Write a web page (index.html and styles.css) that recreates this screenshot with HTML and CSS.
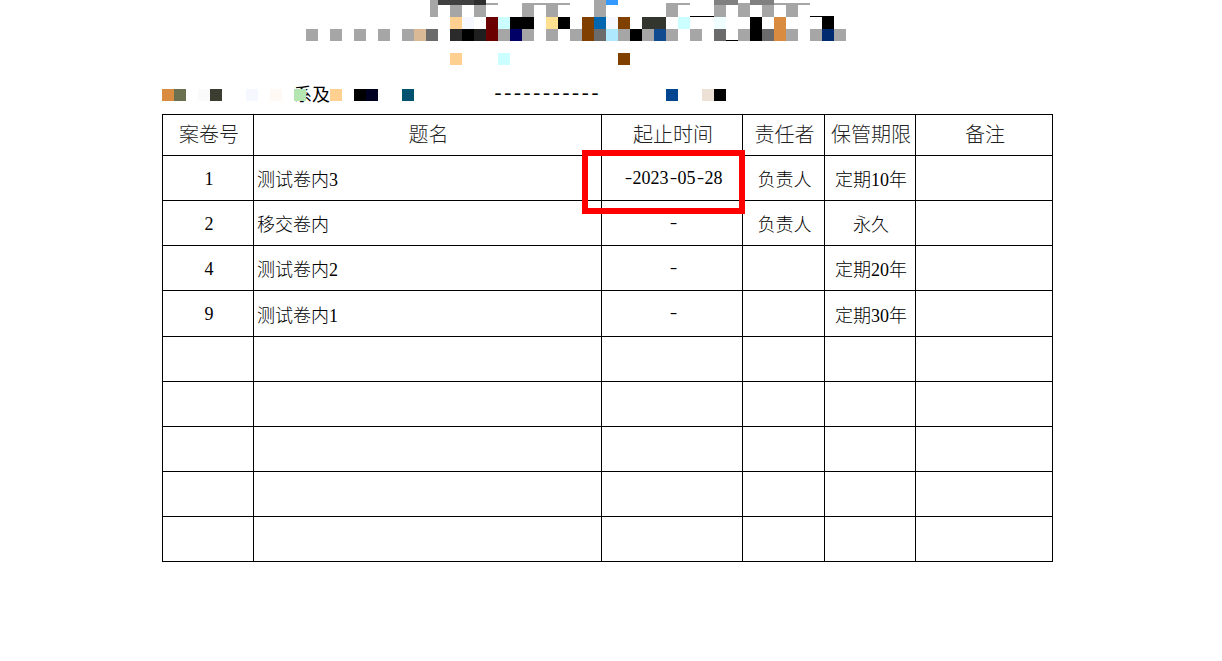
FILE: index.html
```html
<!DOCTYPE html>
<html lang="zh-CN">
<head>
<meta charset="utf-8">
<title>卷内目录</title>
<link rel="stylesheet" href="styles.css">
</head>
<body>
<div class="mosaic" aria-hidden="true">
  <div class="mrow r0"><i></i><i></i><i></i><i></i><i></i><i></i><i></i><i></i><i></i><i></i><i class="p"></i><i class="d4"></i><i class="d4"></i><i class="d4"></i><i class="d2"></i><i class="bar"></i><i></i><i></i><i class="bar"></i><i class="bar"></i><i class="bar"></i><i class="bar"></i><i></i><i></i><i class="g"></i><i class="sky2"></i><i></i><i></i><i></i><i></i><i class="bar"></i><i class="bar"></i><i></i><i></i><i class="m"></i><i class="m"></i><i class="bar"></i><i class="m"></i><i class="m"></i><i class="bar"></i><i class="bar"></i><i class="bar"></i></div>
  <div class="mrow"><i></i><i></i><i></i><i></i><i></i><i></i><i></i><i></i><i></i><i></i><i class="p"></i><i></i><i class="g"></i><i></i><i class="g"></i><i></i><i></i><i></i><i class="g"></i><i></i><i class="g"></i><i></i><i></i><i></i><i class="g"></i><i></i><i></i><i></i><i></i><i></i><i class="g"></i><i></i><i class="ln"></i><i class="ln"></i><i class="g"></i><i></i><i class="g"></i><i></i><i class="g"></i><i></i><i class="g"></i><i></i><i class="ln"></i><i class="ln"></i></div>
  <div class="mrow"><i></i><i></i><i></i><i></i><i></i><i></i><i></i><i></i><i></i><i></i><i></i><i></i><i class="peach"></i><i class="ice"></i><i></i><i class="red"></i><i class="cyan"></i><i class="k"></i><i class="k"></i><i></i><i class="yel"></i><i class="k"></i><i></i><i class="br"></i><i class="blu"></i><i class="ice"></i><i class="br"></i><i></i><i class="c3"></i><i class="c3"></i><i></i><i class="cyan"></i><i></i><i></i><i class="mint"></i><i></i><i></i><i class="k"></i><i></i><i class="or"></i><i></i><i></i><i></i><i class="k"></i></div>
  <div class="mrow"><i class="g"></i><i></i><i class="g"></i><i></i><i class="g"></i><i></i><i class="g"></i><i></i><i class="g"></i><i class="tan"></i><i class="d6"></i><i></i><i class="c2"></i><i class="k"></i><i class="c1"></i><i class="red"></i><i class="g"></i><i class="nv"></i><i class="g"></i><i></i><i class="g"></i><i></i><i class="g"></i><i class="br"></i><i class="d6"></i><i class="sky"></i><i class="g"></i><i class="k"></i><i class="g"></i><i class="bl2"></i><i class="g"></i><i></i><i class="g"></i><i></i><i class="d6"></i><i class="ln"></i><i class="g"></i><i class="k"></i><i class="d6"></i><i class="or"></i><i class="g"></i><i></i><i class="g"></i><i class="nv2"></i><i class="g"></i></div>
  <div class="mrow"></div>
  <div class="mrow"><i></i><i></i><i></i><i></i><i></i><i></i><i></i><i></i><i></i><i></i><i></i><i></i><i class="peach"></i><i></i><i></i><i></i><i class="cyan"></i><i></i><i></i><i></i><i></i><i></i><i></i><i></i><i></i><i></i><i class="br"></i></div>
</div>

<div class="subtitle">
  <i class="or"></i><i class="olive"></i><i></i><i class="faint"></i><i class="c4"></i><i></i><i></i><i class="ice"></i><i></i><i class="cream"></i><i></i><i class="leaf"></i>
  <span class="clip">系及</span>
  <i class="peach"></i><i></i><i class="k"></i><i class="ink"></i><i></i><i></i><i class="teal"></i>
  <span class="rule">-----------</span>
  <i class="bl3"></i><i></i><i></i><i class="sand"></i><i class="k"></i>
</div>

<div class="sheet">
  <table class="catalog">
    <colgroup>
      <col class="c-no"><col class="c-name"><col class="c-date"><col class="c-owner"><col class="c-term"><col class="c-note">
    </colgroup>
    <thead>
      <tr><th>案卷号</th><th>题名</th><th>起止时间</th><th>责任者</th><th>保管期限</th><th>备注</th></tr>
    </thead>
    <tbody>
      <tr><td class="num">1</td><td class="name">测试卷内3</td><td><span class="dash">-</span>2023<span class="dash">-</span>05<span class="dash">-</span>28</td><td>负责人</td><td>定期10年</td><td></td></tr>
      <tr><td class="num">2</td><td class="name">移交卷内</td><td><span class="dash">-</span></td><td>负责人</td><td>永久</td><td></td></tr>
      <tr><td class="num">4</td><td class="name">测试卷内2</td><td><span class="dash">-</span></td><td></td><td>定期20年</td><td></td></tr>
      <tr class="tall"><td class="num">9</td><td class="name">测试卷内1</td><td><span class="dash">-</span></td><td></td><td>定期30年</td><td></td></tr>
      <tr><td></td><td></td><td></td><td></td><td></td><td></td></tr>
      <tr><td></td><td></td><td></td><td></td><td></td><td></td></tr>
      <tr><td></td><td></td><td></td><td></td><td></td><td></td></tr>
      <tr><td></td><td></td><td></td><td></td><td></td><td></td></tr>
      <tr><td></td><td></td><td></td><td></td><td></td><td></td></tr>
    </tbody>
  </table>
  <div class="mark"></div>
</div>
</body>
</html>
```

FILE: styles.css
```css
html, body {
  margin: 0;
  padding: 0;
  background: #fff;
}
body {
  width: 1222px;
  height: 661px;
  overflow: hidden;
  color: #000;
  font-family: "Liberation Serif", "Noto Sans CJK SC", serif;
}
i { display: block; flex: none; width: 12px; height: 12px; }

.mosaic { padding-left: 306px; }
.mrow { display: flex; height: 12px; }
.r0 { height: 5px; }
.r0 i { height: 5px; }
.r0 .bar { height: 2px; margin-top: 3px; background: #a6a6a6; }
.p { width: 8px; margin-left: 4px; background: #a6a6a6; }
.r0 .p { height: 5px; }
.mrow i.g { background: #a6a6a6; }
.mrow i.ln { border-bottom: 1px solid #000; box-sizing: border-box; }
.r0 .m { background: #808080; }
.d4 { background: #404040; }
.d2 { background: #2e2e2e; }
.d6 { background: #6b6b6b; }
.k { background: #000; }
.c1 { background: #1f1f1f; }
.c2 { background: #2b2b2b; }
.c3 { background: #33352f; }
.c4 { background: #3a3d30; }
.peach { background: #ffd08f; }
.ice { background: #f5f9ff; }
.red { background: #6b0000; }
.cyan { background: #ccffff; }
.yel { background: #ffe090; }
.br { background: #804000; }
.blu { background: #0066b0; }
.sky { background: #aee8ff; }
.sky2 { background: #3399ff; }
.mint { background: #efffff; }
.or { background: #d98c40; }
.tan { background: #d9b996; }
.nv { background: #000066; }
.nv2 { background: #002a70; }
.bl2 { background: #124a90; }
.bl3 { background: #004590; }
.olive { background: #6b7050; }
.faint { background: #fafafa; }
.cream { background: #fff9f5; }
.leaf { background: #b5e5b0; position: relative; z-index: 1; }
.ink { background: #000022; }
.teal { background: #005070; }
.sand { background: #ede0d5; }

.subtitle {
  display: flex;
  align-items: center;
  height: 12px;
  margin: 24px 0 13px 162px;
}
.clip {
  flex: none;
  width: 24px;
  direction: rtl;
  white-space: nowrap;
  font-size: 18px;
  line-height: 18px;
}
.rule {
  flex: none;
  width: 174px;
  margin-left: 78px;
  font-family: "Liberation Mono", monospace;
  font-size: 20px;
  letter-spacing: -2.3px;
  line-height: 12px;
  white-space: nowrap;
}

.sheet { position: relative; margin-left: 162px; width: 891px; }
.catalog {
  border-collapse: collapse;
  table-layout: fixed;
  width: 890px;
}
.c-no { width: 91px; }
.c-name { width: 348px; }
.c-date { width: 141px; }
.c-owner { width: 82px; }
.c-term { width: 91px; }
.c-note { width: 137px; }
.catalog th, .catalog td {
  border: 1px solid #000;
  padding: 0 0 0 2px;
  text-align: center;
  font-family: "Liberation Serif", "Noto Sans CJK SC", serif;
  font-weight: 300;
}
.catalog th { height: 37px; padding-bottom: 3px; font-size: 20px; color: #222; }
.catalog td { height: 44px; font-size: 18px; }
.catalog .tall td { height: 45px; }
.catalog td.name { text-align: left; padding-left: 3px; }
.catalog td.num { height: 42px; padding-top: 2px; }
.catalog .tall td.num { height: 43px; }
.dash {
  display: inline-block;
  width: 9px;
  font-family: "Liberation Mono", monospace;
  font-size: 15px;
  line-height: 18px;
  text-align: center;
  vertical-align: 1px;
  transform: scaleX(1.4);
}
.mark {
  position: absolute;
  left: 420px;
  top: 36px;
  width: 151px;
  height: 52px;
  border: 6px solid #f00;
}
```
